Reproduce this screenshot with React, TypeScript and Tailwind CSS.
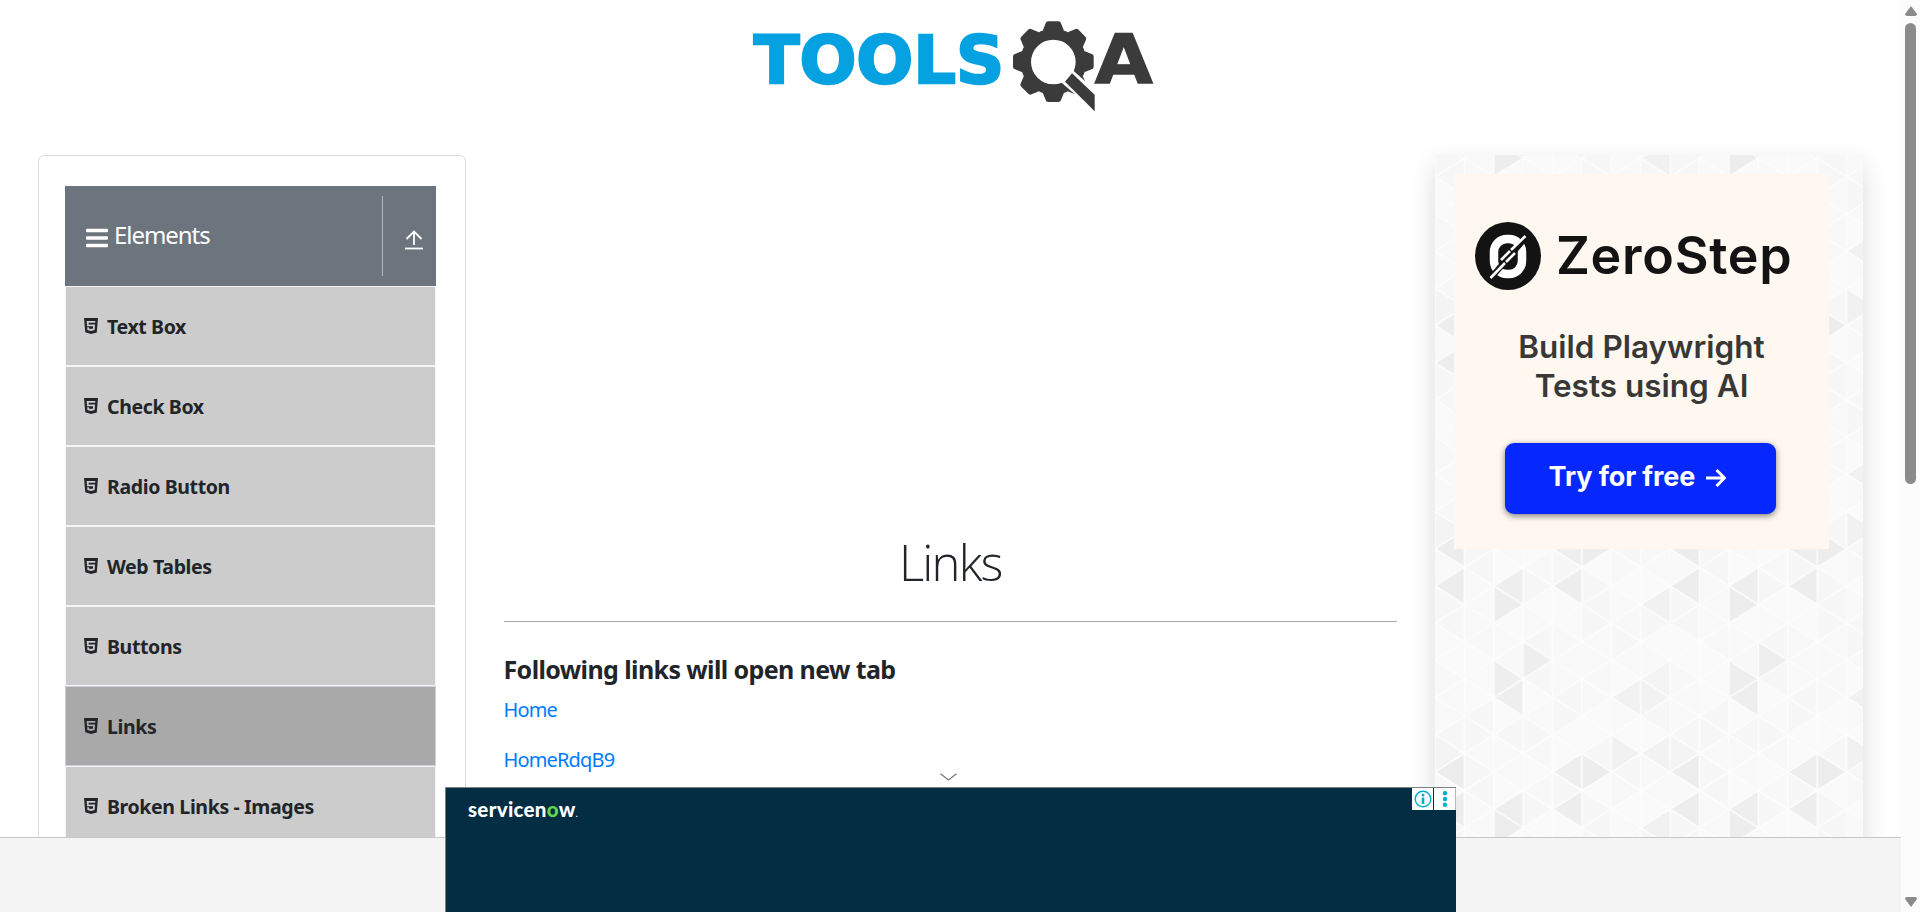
import React from "react";
import { SiHtml5 } from "react-icons/si";

const items = ["Text Box", "Check Box", "Radio Button", "Web Tables", "Buttons", "Links", "Broken Links - Images"];

const COL = 29.4;
const ROW = 18.6;

const shades: Record<string, string> = {
  "3,6": "#eeeeee", "2,7": "#eeeeee", "2,8": "#eeeeee", "6,8": "#f1f1f1", "7,8": "#f2f2f2",
  "7,7": "#f4f4f4", "6,11": "#f1f1f1", "7,11": "#f2f2f2", "0,11": "#f4f4f4", "0,0": "#ededed",
  "4,0": "#eeeeee", "5,0": "#ededed", "4,2": "#ededed", "2,2": "#eeeeee", "0,2": "#ededed",
  "2,3": "#ededed", "7,3": "#f1f1f1",
};

const pale = ["#f8f8f8", "#fafafa", "#f7f7f7", "#f9f9f9", "#fafafa", "#f7f7f7", "#f9f9f9"];

function Triangles() {
  const shapes: React.ReactNode[] = [];
  for (let c = 0; c < 8; c++) {
    for (let r = 0; r <= 12; r++) {
      const left = (c + r) % 2 === 0;
      const x0 = c * COL;
      const x1 = x0 + COL;
      const y = r * ROW;
      const pts = left
        ? `${x0},${y} ${x1},${y - ROW} ${x1},${y + ROW}`
        : `${x1},${y} ${x0},${y - ROW} ${x0},${y + ROW}`;
      const rr = r % 12;
      const fill = shades[`${c},${rr}`] ?? pale[(c * 5 + rr * 3 + ((c * rr) % 4)) % pale.length];
      shapes.push(<polygon key={`${c}-${r}`} points={pts} fill={fill} stroke="#fdfdfd" strokeWidth="1.4" />);
    }
  }
  return (
    <svg className="absolute inset-0 h-full w-full" aria-hidden="true">
      <defs>
        <pattern id="tri" width={COL * 8} height={ROW * 12} patternUnits="userSpaceOnUse" patternTransform="translate(0 -52.6)">
          {shapes}
        </pattern>
      </defs>
      <rect width="100%" height="100%" fill="url(#tri)" />
    </svg>
  );
}

function Logo() {
  return (
    <svg viewBox="0 0 1290 330" className="ml-[9px] h-[110px] w-[430px]">
      <text x="41" y="218" textLength="752" lengthAdjust="spacingAndGlyphs" fill="#05a1e0" stroke="#05a1e0" strokeWidth="7" fontSize="200" fontWeight="700" fontFamily="DejaVu Sans, sans-serif">TOOLS</text>
      <g fill="#3b3b3b">
        {[0, 45, 90, 135, 180, 225, 270, 315].map((a) => (
          <path key={a} transform={`rotate(${a} 940 155)`} d="M908 62 L917 40 Q918 34 925 34 H955 Q962 34 963 40 L972 62 Z" />
        ))}
        <path fillRule="evenodd" d="M940 56 A99 99 0 1 1 940 254 A99 99 0 1 1 940 56 Z M940 89 A67 67 0 1 0 940 223 A67 67 0 1 0 940 89 Z" />
      </g>
      <path d="M958 212 L1000 182 L1070 244 L1070 310 Z" fill="#fff" />
      <path d="M996 190 L1064 254 V304 L975 215 Z" fill="#3b3b3b" />
      <text x="1064" y="219" textLength="174" lengthAdjust="spacingAndGlyphs" fill="#3b3b3b" stroke="#3b3b3b" strokeWidth="4" fontSize="202" fontWeight="700" fontFamily="DejaVu Sans, sans-serif">A</text>
    </svg>
  );
}

function Sidebar() {
  return (
    <aside className="h-[800px] w-[428px] shrink-0 rounded-md border border-[#dcdcdc] px-[26px] pt-[30px]">
      <div className="flex h-[100px] w-[371px] items-center bg-[#6c757d] text-white">
        <svg viewBox="0 0 22 20" className="ml-[21px] mt-[4px] h-5 w-[22px]" fill="currentColor">
          <rect y="0.8" width="22" height="3.4" rx="1" />
          <rect y="8.3" width="22" height="3.4" rx="1" />
          <rect y="15.8" width="22" height="3.4" rx="1" />
        </svg>
        <span className="-mt-[3px] ml-[6px] text-[24px] leading-9 tracking-[-1.05px]">Elements</span>
        <div className="ml-auto flex h-20 w-[54px] items-center border-l border-[#b5b5b5] pl-[22px]">
          <svg viewBox="0 0 18 20" className="mt-[8px] h-5 w-[18px]" fill="none" stroke="currentColor" strokeWidth="1.8">
            <path d="M9 15 V1.5 M1.5 9 L9 1.5 L16.5 9" />
            <path d="M0 18.5 H18" />
          </svg>
        </div>
      </div>
      <ul className="w-[371px]">
        {items.map((t) => (
          <li
            key={t}
            className={
              t === "Links"
                ? "flex h-20 items-center border border-[#d0d0d8] bg-[#a9a9a9] pl-[17px]"
                : "flex h-20 items-center border border-[#f5f5f5] bg-[#ccc] pl-[17px]"
            }
          >
            <SiHtml5 className="h-[16px] w-[16px]" />
            <span className="ml-[8px] mt-[2px] whitespace-nowrap text-[19.5px] font-bold tracking-[-0.37px]">{t}</span>
          </li>
        ))}
      </ul>
    </aside>
  );
}

function Main() {
  return (
    <main className="ml-[37.5px] w-[893.5px] shrink-0 pt-[365px]">
      <h1 className="h-[101px] text-center font-['Open_Sans'] text-[49px] font-light leading-[84px] tracking-[-1.8px]">Links</h1>
      <div className="h-px bg-[#a9a9a9]" />
      <h5 className="mt-[31px] whitespace-nowrap text-[25px] font-bold leading-[32px] tracking-[-0.61px]">Following links will open new tab</h5>
      <a className="mt-[10px] block text-[20px] leading-[30px] tracking-[-0.85px] text-[#007bff]">Home</a>
      <a className="mt-[20px] block text-[20px] leading-[30px] tracking-[-0.85px] text-[#007bff]">HomeRdqB9</a>
    </main>
  );
}

function RightPanel() {
  return (
    <aside className="relative ml-[38px] h-[800px] w-[428px] shrink-0 bg-[#fafafa] shadow-[0_10px_25px_rgba(0,0,0,0.14)]">
      <Triangles />
      <div className="relative ml-[19px] mt-[19px] h-[375px] w-[375px] bg-[#fef8f1] font-['Inter'] text-[#333]">
        <div className="flex items-center pl-[21px] pt-[48px]">
          <svg viewBox="0 0 66 68" className="h-[68px] w-[66px]">
            <ellipse cx="33" cy="34" rx="33" ry="34" fill="#131313" />
            <rect x="19" y="17" width="28" height="35" rx="13" fill="none" stroke="#fff" strokeWidth="8.5" />
            <path d="M15 57 L52 14" stroke="#131313" strokeWidth="6" />
            <path d="M15.500 56 L30 41 M26 38 L35 29 M31 40 L40 31 M36 28 L50.500 14" stroke="#fff" strokeWidth="2.600" />
          </svg>
          <span className="ml-[15px] text-[52px] font-semibold leading-[60px] tracking-[0.7px] text-[#131313]">ZeroStep</span>
        </div>
        <p className="mt-[37px] text-center text-[31.500px] font-semibold leading-[39px] text-[#3a3836]">
          Build Playwright<br />Tests using AI
        </p>
        <div className="ml-[50.500px] mt-[38px] flex h-[71px] w-[271px] items-center rounded-[9px] bg-[#0628ff] pl-[44px] text-white shadow-[0_2px_6px_rgba(0,0,0,0.5)]">
          <span className="-mt-[3px] whitespace-nowrap text-[27px] font-bold tracking-[-0.1px]">Try for free</span>
          <svg viewBox="0 0 20 18" className="-mt-[2px] ml-[11px] h-[18px] w-5" fill="none" stroke="#fff" strokeWidth="3">
            <path d="M0 9 H18 M10.500 1 L18.500 9 L10.500 17" />
          </svg>
        </div>
      </div>
    </aside>
  );
}

function BottomAd() {
  return (
    <div className="absolute bottom-0 left-[445px] flex h-[125px] w-[1011px] justify-between border-l border-t border-[#808080] bg-[#032d42]">
      <div className="pl-[22px] pt-[8px] font-['Lato'] text-[20.500px] font-black leading-[26px] tracking-[0.3px] text-white">
        servicen<span className="text-[#62d84e]">o</span>w<span className="text-[8px]">.</span>
      </div>
      <div className="flex h-[22px] gap-px">
        <div className="flex w-[21px] items-center justify-center bg-white">
          <svg viewBox="0 0 18 18" className="h-[18px] w-[18px]">
            <circle cx="9" cy="9" r="7.800" fill="none" stroke="#00aecd" strokeWidth="1.400" />
            <circle cx="9" cy="5" r="1.500" fill="#00aecd" />
            <rect x="7.700" y="7.500" width="2.600" height="6.500" fill="#00aecd" />
          </svg>
        </div>
        <div className="flex w-[22px] items-center justify-center border-r border-[#bbb] bg-white">
          <svg viewBox="0 0 6 18" className="h-[18px] w-[6px]" fill="#00aecd">
            <circle cx="3" cy="3.200" r="2.200" />
            <circle cx="3" cy="9" r="2.200" />
            <circle cx="3" cy="14.800" r="2.200" />
          </svg>
        </div>
      </div>
    </div>
  );
}

export default function App() {
  return (
    <div className="flex h-[912px] w-full overflow-hidden bg-white font-['Noto_Sans',sans-serif] text-[#212529]">
      <div className="relative flex h-full min-w-0 flex-1 flex-col overflow-hidden">
        <header className="flex h-[155px] shrink-0 justify-center pt-[10px]">
          <Logo />
        </header>
        <div className="flex pl-[38px]">
          <Sidebar />
          <Main />
          <RightPanel />
        </div>
        <div className="absolute bottom-0 left-0 h-[75px] w-full border-t border-[#c8c8c8] bg-[#f4f4f4]" />
        <svg viewBox="0 0 17 8" className="absolute left-[940px] top-[773px] h-2 w-[17px]" fill="none" stroke="#777" strokeWidth="1.200">
          <path d="M0.500 0.800 L8.500 7 L16.500 0.800" />
        </svg>
        <BottomAd />
      </div>
      <div className="flex h-full w-[19px] shrink-0 flex-col items-center bg-[#fcfcfc]">
        <svg viewBox="0 0 12 10" className="mt-[6px] h-[10px] w-3" fill="#8b8b8b"><path d="M6 0 L12 8 Q12 10 10 10 H2 Q0 10 0 8 Z" /></svg>
        <div className="mt-[7px] h-[461px] w-[11px] rounded-full bg-[#8b8b8b]" />
        <svg viewBox="0 0 12 10" className="mb-[5px] mt-auto h-[10px] w-3" fill="#8b8b8b"><path d="M6 10 L12 2 Q12 0 10 0 H2 Q0 0 0 2 Z" /></svg>
      </div>
    </div>
  );
}
